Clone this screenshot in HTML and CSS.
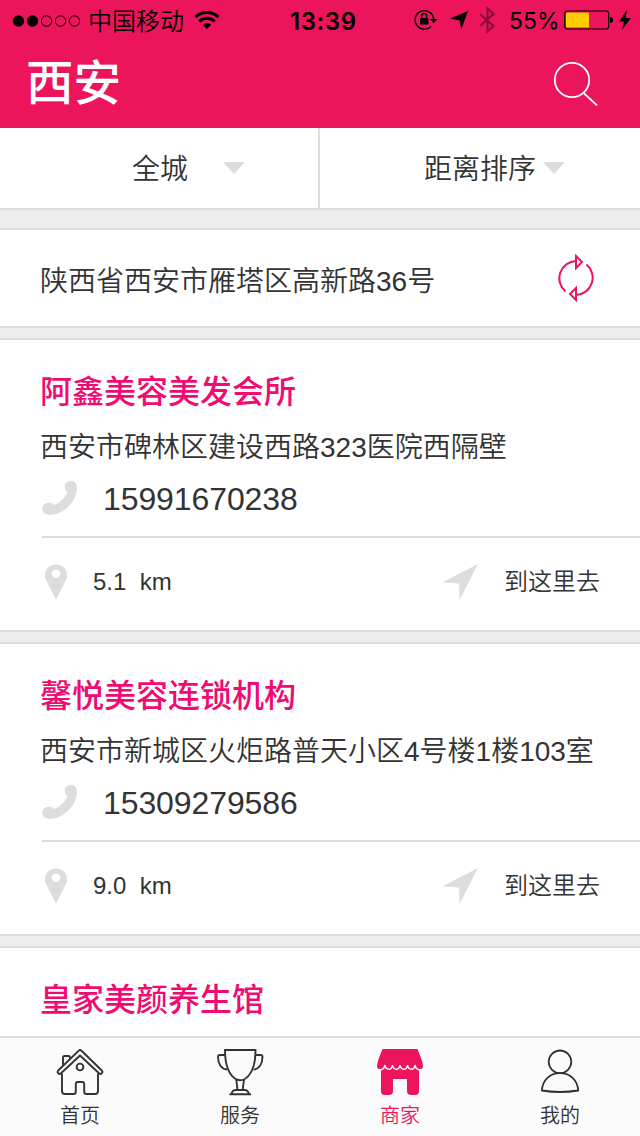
FILE: index.html
```html
<!DOCTYPE html>
<html lang="zh-CN">
<head>
    <meta charset="UTF-8">
    <meta name="viewport" content="width=device-width, initial-scale=1.0">
    <title>商家</title>
    <link rel="stylesheet" href="styles.css">
</head>
<body>
    <!-- shared icons -->
    <svg class="sprite" width="0" height="0">
        <symbol id="icon-phone" viewBox="0 0 36 36">
            <path d="M22.700 7C22.700 3.500 25.500 1 29 1c3.800 0 6 2.700 6 7C35 21 21.500 34.800 8 34.800c-5 0-7.700-2.300-7.700-6 0-3.500 2.700-6 6.200-6 2.400 0 4 .8 5.200 2.300C17 23.500 23.500 17.500 25.500 12.200 23.500 11 22.700 9.200 22.700 7z"/>
        </symbol>
        <symbol id="icon-pin" viewBox="0 0 22 36">
            <path fill-rule="evenodd" d="M11 .5C5 .5 0 5 0 11c0 2.500.8 4.500 2 7l9 17.500L20 18c1.200-2.500 2-4.500 2-7C22 5 17 .5 11 .5zM11 5.500a4.200 4.200 0 1 1 0 8.400 4.200 4.200 0 0 1 0-8.400z"/>
        </symbol>
        <symbol id="icon-arrow" viewBox="0 0 36 36">
            <path d="M36 0L17.500 36 17 19.500 0 18.500z"/>
        </symbol>
    </svg>

    <div class="page">
        <header class="header">
            <div class="status-bar">
                <div class="status-left">
                    <svg class="signal" width="70" height="14" viewBox="0 0 70 14">
                        <circle cx="6.500" cy="7" r="5.700"/>
                        <circle cx="20.500" cy="7" r="5.700"/>
                        <g fill="none" stroke="#000">
                            <circle cx="34.500" cy="7" r="5.200"/>
                            <circle cx="48.500" cy="7" r="5.200"/>
                            <circle cx="62.500" cy="7" r="5.200"/>
                        </g>
                    </svg>
                    <span class="carrier">中国移动</span>
                    <svg class="wifi" width="26" height="20" viewBox="0 0 26 20">
                        <g fill="none" stroke="#000" stroke-width="3">
                            <path d="M1.500 7.200a16.500 16.500 0 0 1 23 0"/>
                            <path d="M5.300 11.500a11 11 0 0 1 15.400 0"/>
                        </g>
                        <path d="M13 19l-4.300-4.300a6.200 6.200 0 0 1 8.600 0z"/>
                    </svg>
                </div>
                <span class="time">13:39</span>
                <div class="status-right">
                    <svg width="24" height="22" viewBox="0 0 24 22">
                        <path fill="none" stroke="#000" stroke-width="1.400" d="M17 17.500A9.300 9.300 0 1 1 19.700 10.500"/>
                        <path d="M16 10h7.500L19.700 14.200z"/>
                        <rect x="6" y="9" width="8.500" height="6.500" rx=".7"/>
                        <path fill="none" stroke="#000" stroke-width="1.300" d="M7.700 9.500V7a2.500 2.500 0 0 1 5 0V9.500"/>
                    </svg>
                    <svg class="gps" width="18" height="18" viewBox="0 0 18 18">
                        <path d="M18 0L11.300 18 9.500 9.300 0 7.800z"/>
                    </svg>
                    <svg class="bluetooth" width="16" height="28" viewBox="0 0 16 28">
                        <path fill="none" stroke="#000" stroke-width="2.200" d="M1 8l13.500 12-6 5.500V2.500l6 5.500L1 20"/>
                    </svg>
                    <span class="percent">55%</span>
                    <svg class="battery" width="50" height="20" viewBox="0 0 50 20">
                        <rect x=".7" y="1" width="44" height="18" rx="2.800" fill="none" stroke="#000" stroke-width="1.200"/>
                        <rect x="2" y="2.500" width="23" height="15" rx="1" fill="#fc0"/>
                        <path d="M46 7c2 0 3 1.200 3 3s-1 3-3 3z"/>
                    </svg>
                    <svg class="bolt" width="12" height="20" viewBox="0 0 12 20">
                        <path d="M8 0L0 11.500h5L3 20l9-12H6.700z"/>
                    </svg>
                </div>
            </div>
            <div class="title-bar">
                <h1>西安</h1>
                <svg class="search" width="46" height="46" viewBox="0 0 46 46">
                    <g fill="none" stroke="#fff" stroke-width="1.800">
                        <circle cx="19" cy="19" r="17.200"/>
                        <path d="M31 32.300l13 12"/>
                    </g>
                </svg>
            </div>
        </header>

        <nav class="filters">
            <div class="filter filter-city"><span>全城</span><i class="caret"></i></div>
            <div class="filter filter-sort"><span>距离排序</span><i class="caret"></i></div>
        </nav>

        <section class="location">
            <span>陕西省西安市雁塔区高新路36号</span>
            <svg class="refresh" width="38" height="48" viewBox="0 0 38 48">
                <g fill="none" stroke="#ec145b" stroke-width="2">
                    <path d="M8.500 37.500A17.300 17.300 0 0 1 19 7M19 2v12l6-6z"/>
                    <path d="M29.500 10.500A17.300 17.300 0 0 1 19 41M19 46V34l-6 6z"/>
                </g>
            </svg>
        </section>

        <main class="list">
            <article class="card">
                <div class="info">
                    <h2>阿鑫美容美发会所</h2>
                    <p class="address">西安市碑林区建设西路323医院西隔壁</p>
                    <p class="phone"><svg width="36" height="36"><use href="#icon-phone"/></svg><span>15991670238</span></p>
                </div>
                <div class="actions">
                    <div class="distance"><svg width="22" height="36"><use href="#icon-pin"/></svg>5.1&nbsp;&nbsp;km</div>
                    <div class="go"><svg width="36" height="36"><use href="#icon-arrow"/></svg><span>到这里去</span></div>
                </div>
            </article>

            <article class="card">
                <div class="info">
                    <h2>馨悦美容连锁机构</h2>
                    <p class="address">西安市新城区火炬路普天小区4号楼1楼103室</p>
                    <p class="phone"><svg width="36" height="36"><use href="#icon-phone"/></svg><span>15309279586</span></p>
                </div>
                <div class="actions">
                    <div class="distance"><svg width="22" height="36"><use href="#icon-pin"/></svg>9.0&nbsp;&nbsp;km</div>
                    <div class="go"><svg width="36" height="36"><use href="#icon-arrow"/></svg><span>到这里去</span></div>
                </div>
            </article>

            <article class="card">
                <div class="info">
                    <h2>皇家美颜养生馆</h2>
                </div>
            </article>
        </main>

        <footer class="tabs">
            <a class="tab">
                <svg width="48" height="48" viewBox="0 0 48 48">
                    <g fill="none" stroke="#333" stroke-width="1.900" stroke-linejoin="round">
                        <path d="M7 18V9.500Q7 8 8.500 8h4Q14 8 14 9.500V11"/>
                        <path d="M24 2Q23.300 2 22.500 2.800L2.200 22.500Q1 24 2.200 25.300 3.500 26.500 5 25.300L24 7.500l19 17.800q1.500 1.200 2.800 0 1.200-1.300 0-2.800L25.500 2.800Q24.700 2 24 2z"/>
                        <path d="M6 25.500V43q0 3 3 3h8.500q2.300 0 2.300-2.300V36q0-2 2-2h4.400q2 0 2 2v7.700q0 2.300 2.300 2.300H39q3 0 3-3V25.500"/>
                        <circle cx="24" cy="19" r="3.400"/>
                    </g>
                </svg>
                <span>首页</span>
            </a>
            <a class="tab">
                <svg width="48" height="48" viewBox="0 0 48 48">
                    <g fill="none" stroke="#333" stroke-width="1.900">
                        <path d="M9 2h30.500C39.500 18 36 27 28 31.500q-3.500 1.500-7.500 0C12.500 27 9 18 9 2z"/>
                        <path d="M9 7H4Q2 7 2 9c0 7 3.500 12 9 12.500M39.500 7h5q2 0 2 2c0 7-3.500 12-9 12.500"/>
                        <path d="M20.300 31.500L21.500 42M28 31.500L26.700 42M13.500 46.200h21.500M15.500 46q.8-4 4.500-4h8.500q3.500 0 4.500 4"/>
                    </g>
                </svg>
                <span>服务</span>
            </a>
            <a class="tab active">
                <svg width="48" height="48" viewBox="0 0 48 48">
                    <path fill="#ec145b" d="M6.500 1h35q5.500 13 5.500 17 0 3.500-4 4V43q0 4-3.500 4H35q-4 0-4-4V31H17v12q0 4-4 4H8.500Q5 47 5 43V22q-4-.5-4-4Q1 14 6.500 1z"/>
                    <path fill="none" stroke="#fbfbfb" stroke-width="1.500" stroke-linejoin="bevel" d="M3 21.500Q8 22.500 9 17q.7 4.300 3.800 4.300T16.500 17q.7 4.300 3.800 4.300T24 17q.7 4.300 3.800 4.300T31.500 17q.7 4.300 3.800 4.300T39 17q1 5.500 6 4.500"/>
                </svg>
                <span>商家</span>
            </a>
            <a class="tab">
                <svg width="48" height="48" viewBox="0 0 48 48">
                    <g fill="none" stroke="#333" stroke-width="1.800">
                        <circle cx="24" cy="13.800" r="11.300"/>
                        <path d="M5.900 42.500C6.500 32 14 25.200 24 25.200S41.500 32 42.200 42.500q-18.200 3-36.300 0z"/>
                    </g>
                </svg>
                <span>我的</span>
            </a>
        </footer>
    </div>
</body>
</html>
```
FILE: styles.css
```css
* {
    margin: 0;
    padding: 0;
    box-sizing: border-box;
}

body {
    font-family: "Liberation Sans", "Noto Sans CJK SC", sans-serif;
    font-weight: 350;
    background: #ededed;
    color: #333;
}

svg {
    display: block;
    flex-shrink: 0;
}

.sprite {
    display: none;
}

.page {
    height: 1136px;
    display: flex;
    flex-direction: column;
    overflow: hidden;
}

/* header */
.header {
    height: 128px;
    flex-shrink: 0;
    background: #ec145b;
}

.status-bar {
    display: grid;
    grid-template-columns: 290px 1fr auto;
    align-items: center;
    height: 40px;
    color: #000;
}

.status-left,
.status-right {
    display: flex;
    align-items: center;
}

.status-left {
    padding-left: 12px;
}

.signal {
    margin-top: 1px;
}

.carrier {
    margin-left: 6px;
    padding-top: 3px;
    font-size: 24px;
    line-height: 37px;
}

.wifi {
    margin-left: 10px;
}

.time {
    padding-top: 2px;
    font-family: Inter, sans-serif;
    font-size: 24px;
    font-weight: 600;
    letter-spacing: 0.6px;
}

.status-right {
    padding-right: 9px;
}

.gps {
    margin-left: 12px;
}

.bluetooth {
    margin-left: 11px;
    opacity: 0.4;
}

.percent {
    width: 69px;
    padding: 1px 0 0 14px;
    font-family: Inter, sans-serif;
    font-size: 23px;
    font-weight: 400;
}

.bolt {
    margin-left: 5px;
}

.title-bar {
    display: flex;
    align-items: center;
    justify-content: space-between;
    height: 88px;
    padding: 0 41px 0 26px;
}

.title-bar h1 {
    font-size: 47.5px;
    font-weight: 500;
    line-height: 86px;
    color: #fff;
}

/* filters */
.filters {
    display: flex;
    flex-shrink: 0;
    height: 82px;
    background: #fff;
    border-bottom: 2px solid #ddd;
}

.filter {
    display: flex;
    align-items: center;
    justify-content: flex-end;
    width: 320px;
    font-size: 28px;
    line-height: 76px;
}

.filter span {
    padding-top: 4px;
}

.filter-city {
    padding-right: 73px;
    gap: 35px;
    border-right: 2px solid #ddd;
}

.filter-sort {
    padding-right: 75px;
    gap: 7px;
}

.caret {
    border: 11px solid transparent;
    border-top: 12px solid #ddd;
    border-bottom: 0;
}

/* current location */
.location {
    display: flex;
    flex-shrink: 0;
    align-items: center;
    justify-content: space-between;
    height: 100px;
    margin-top: 18px;
    padding: 0 45px 0 40px;
    background: #fff;
    border-top: 2px solid #ddd;
    border-bottom: 2px solid #ddd;
    font-size: 28px;
    line-height: 88px;
}

.location span {
    padding-top: 8px;
}

/* shop list */
.list {
    flex: 1;
    min-height: 0;
    overflow: hidden;
}

.card {
    height: 294px;
    margin-top: 10px;
    background: #fff;
    border-top: 2px solid #ddd;
    border-bottom: 2px solid #ddd;
}

.info {
    height: 198px;
    margin-left: 42px;
    padding-top: 29px;
    border-bottom: 2px solid #ddd;
}

.info h2 {
    margin-left: -2px;
    font-size: 32px;
    font-weight: 500;
    line-height: 46px;
    color: #f00b72;
}

.address {
    margin-left: -2px;
    padding-top: 2px;
    font-size: 28px;
    line-height: 61px;
    white-space: nowrap;
}

.phone {
    display: flex;
    align-items: center;
    gap: 25px;
    height: 40px;
    font-size: 32px;
    letter-spacing: -0.1px;
}

.phone span {
    padding-top: 2px;
}

.phone svg,
.actions svg {
    fill: #ddd;
}

.actions {
    display: flex;
    align-items: center;
    justify-content: space-between;
    height: 92px;
    padding: 0 40px 4px 45px;
    font-size: 24px;
    line-height: 36px;
}

.distance,
.go {
    display: flex;
    align-items: center;
    gap: 26px;
}

/* bottom tabs */
.tabs {
    display: flex;
    flex-shrink: 0;
    height: 100px;
    background: #fbfbfb;
    border-top: 2px solid #ddd;
}

.tab {
    display: flex;
    flex-direction: column;
    align-items: center;
    width: 160px;
    padding-top: 10px;
    font-size: 20px;
    line-height: 40px;
}

.tab.active {
    color: #ec145b;
}
```
